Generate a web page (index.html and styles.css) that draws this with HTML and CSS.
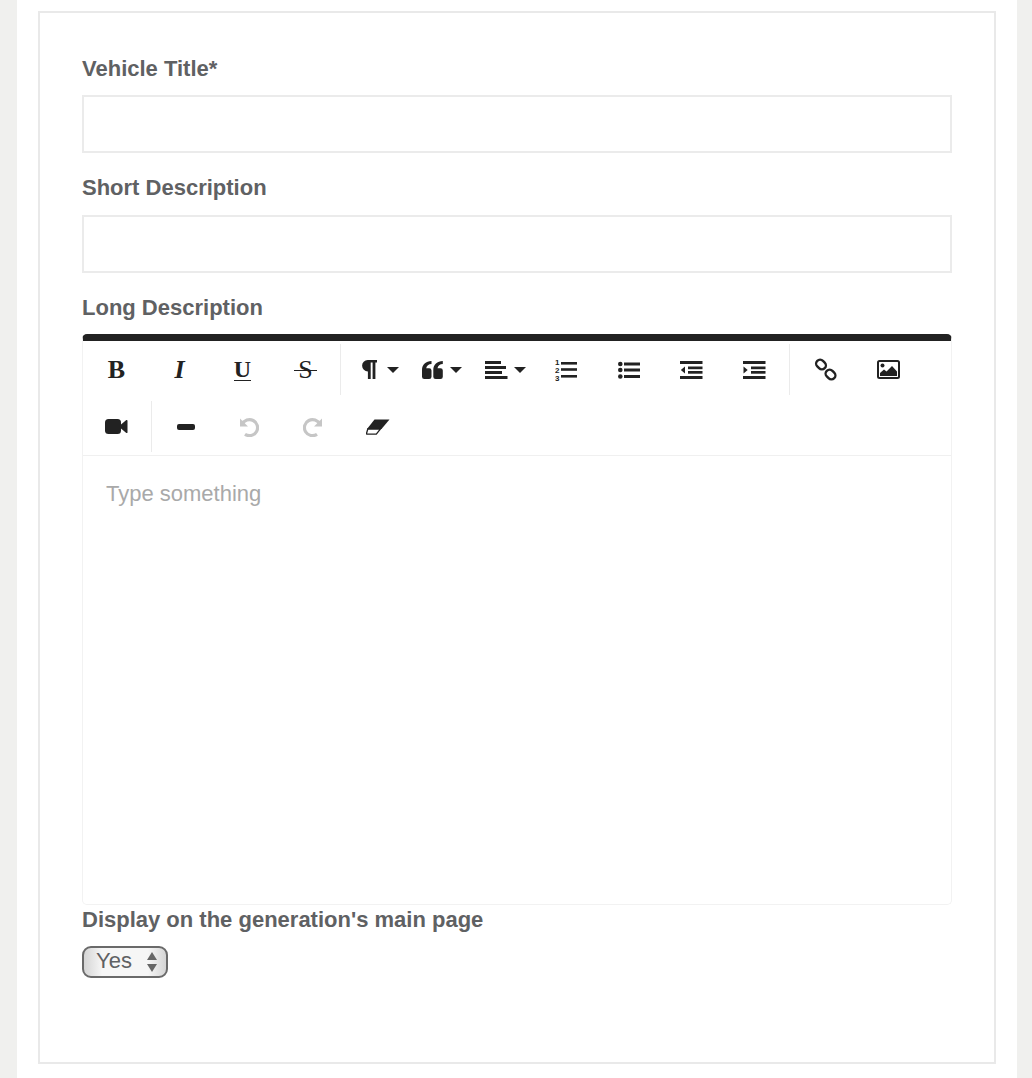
FILE: index.html
```html
<!DOCTYPE html>
<html lang="en">
<head>
  <meta charset="UTF-8" />
  <meta name="viewport" content="width=device-width, initial-scale=1.0"/>
  <title>Add Vehicle</title>
  <link rel="stylesheet" href="styles.css">
</head>
<body>
  <div class="page">
    <form class="panel">
      <label class="field-label" for="title">Vehicle Title*</label>
      <input class="field-input" type="text" id="title" />

      <label class="field-label field-label-low" for="short">Short Description</label>
      <input class="field-input" type="text" id="short" />

      <label class="field-label">Long Description</label>
      <div class="editor">
        <div class="toolbar">
          <button type="button" class="tool"><span class="serif">B</span></button>
          <button type="button" class="tool"><span class="serif italic">I</span></button>
          <button type="button" class="tool"><span class="serif under">U</span></button>
          <button type="button" class="tool"><span class="serif strike">S</span></button>
          <span class="sep"></span>

          <button type="button" class="tool tool-para">
            <svg width="15" height="19" viewBox="0 0 15 19"><path d="M5.700 0H15v2.600h-1.600V19h-2.800V2.600H8.700V19H5.900v-7.600A5.700 5.700 0 0 1 5.700 0z"/></svg>
            <i class="caret"></i>
          </button>
          <button type="button" class="tool tool-drop">
            <svg width="21" height="18" viewBox="0 0 21 18"><path d="M9.500 0v3C6.600 3 4.600 4.700 4.200 7.200h3a2.300 2.300 0 0 1 2.300 2.300v6.200A2.300 2.300 0 0 1 7.200 18H2.300A2.300 2.300 0 0 1 0 15.700V9C0 3.600 4 0 9.500 0z"/><path d="M20.800 0v3c-2.900 0-4.900 1.700-5.300 4.200h3a2.300 2.300 0 0 1 2.300 2.300v6.200a2.300 2.300 0 0 1-2.300 2.300h-4.900a2.300 2.300 0 0 1-2.300-2.300V9c0-5.400 4-9 9.500-9z"/></svg>
            <i class="caret"></i>
          </button>
          <button type="button" class="tool tool-drop">
            <svg width="23" height="18" viewBox="0 0 23 18"><rect width="16" height="3"/><rect y="5" width="21" height="3"/><rect y="10" width="17" height="3"/><rect y="15" width="22.500" height="3"/></svg>
            <i class="caret caret-near"></i>
          </button>
          <button type="button" class="tool">
            <svg width="22" height="26" viewBox="0 -2 22 26">
              <text class="nums" x="0" y="6">1</text><text class="nums" x="0" y="14">2</text><text class="nums" x="0" y="22">3</text>
              <rect x="6" y="3" width="16" height="2.600"/><rect x="6" y="9.200" width="16" height="2.600"/><rect x="6" y="16" width="16" height="2.600"/>
            </svg>
          </button>
          <button type="button" class="tool">
            <svg width="22" height="18" viewBox="0 0 22 18">
              <circle cx="2.300" cy="3" r="2.300"/><circle cx="2.300" cy="9" r="2.300"/><circle cx="2.300" cy="15.500" r="2.300"/>
              <rect x="6" y="1.500" width="16" height="3"/><rect x="6" y="7.500" width="16" height="3"/><rect x="6" y="14" width="16" height="3"/>
            </svg>
          </button>
          <button type="button" class="tool">
            <svg width="23" height="18" viewBox="0 0 23 18">
              <rect width="22.500" height="3"/><rect x="8" y="5.500" width="14.500" height="2.700"/><rect x="8" y="10" width="14.500" height="2.700"/><rect y="15" width="22.500" height="3"/>
              <path d="M5 5.500v7L.8 9z"/>
            </svg>
          </button>
          <button type="button" class="tool">
            <svg width="23" height="18" viewBox="0 0 23 18">
              <rect width="22.500" height="3"/><rect x="8" y="5.500" width="14.500" height="2.700"/><rect x="8" y="10" width="14.500" height="2.700"/><rect y="15" width="22.500" height="3"/>
              <path d="M.5 5.500v7L4.700 9z"/>
            </svg>
          </button>
          <span class="sep"></span>

          <button type="button" class="tool">
            <svg width="22" height="21" viewBox="0 0 22 21" class="link-icon">
              <rect x=".75" y="1.500" width="10.500" height="8" rx="4" transform="rotate(45 6 5.500)"/>
              <rect x="10.250" y="11.500" width="10.500" height="8" rx="4" transform="rotate(45 15.500 15.500)"/>
            </svg>
          </button>
          <button type="button" class="tool">
            <svg width="23" height="19" viewBox="0 0 23 19">
              <rect x="1" y="1" width="21" height="17" rx="1.500" fill="#fff" stroke="#222" stroke-width="2"/>
              <circle cx="5.500" cy="5.500" r="2"/>
              <path d="M3 16v-3l4-3.500 2.500 2L15 6l5 5.500V16z"/>
            </svg>
          </button>
          <button type="button" class="tool">
            <svg width="23" height="15" viewBox="0 0 23 15">
              <rect width="16" height="15" rx="3.500"/>
              <path d="M16 5.500 21 1.200c.7-.6 1.500-.3 1.500.6v11.400c0 .9-.8 1.200-1.500.6l-5-4.300z"/>
            </svg>
          </button>
          <span class="sep sep-tight"></span>

          <button type="button" class="tool">
            <svg width="18" height="6" viewBox="0 0 18 6"><rect width="18" height="6" rx="2"/></svg>
          </button>
          <button type="button" class="tool">
            <svg class="off" width="20" height="20" viewBox="0 0 20 20"><path d="M3.200 7.500A8 8 0 1 1 6 17.200" fill="none" stroke-width="3.200"/><path class="head" d="M1 1.500v8h8z"/></svg>
          </button>
          <button type="button" class="tool tool-nudge">
            <svg class="off" width="20" height="20" viewBox="0 0 20 20"><path d="M16.800 7.500A8 8 0 1 0 14 17.200" fill="none" stroke-width="3.200"/><path class="head" d="M19 1.500v8h-8z"/></svg>
          </button>
          <button type="button" class="tool tool-nudge">
            <svg width="24" height="16" viewBox="0 0 24 16">
              <path d="M8.500.5H23.500L15.500 10H1z"/>
              <path d="M1.800 10h12.700l-4.200 5.200H1.200c-.7 0-1-.5-.6-1.100z" fill="#fff" stroke="#222" stroke-width="1.300"/>
            </svg>
          </button>
        </div>
        <div class="editor-body">
          <span class="placeholder">Type something</span>
        </div>
      </div>

      <label class="field-label" for="display">Display on the generation's main page</label>
      <div class="select-wrap">
        <select class="mini-select" id="display">
          <option>Yes</option>
          <option>No</option>
        </select>
        <svg class="select-arrows" width="12" height="22" viewBox="0 0 12 22"><path d="M6 1l5 8H1zM1 13h10l-5 8z"/></svg>
      </div>
    </form>
  </div>
</body>
</html>
```

FILE: styles.css
```css
html, body {
  margin: 0;
  padding: 0;
}
body {
  background-color: #f0f0ee;
  font-family: "Liberation Sans", Arial, sans-serif;
  color: #5f6163;
}
.page {
  width: 1000px;
  height: 1078px;
  margin-left: 17px;
  padding: 11px 21px 0;
  box-sizing: border-box;
  background: white;
}
.panel {
  border: 2px solid #e9e9e9;
  padding: 41px 42px 84px;
}
.field-label {
  display: block;
  font-size: 22px;
  font-weight: bold;
  line-height: 30px;
  margin-bottom: 11px;
}
.field-label-low {
  margin-bottom: 12px;
}
.field-input {
  display: block;
  width: 100%;
  height: 58px;
  box-sizing: border-box;
  border: 2px solid #ebebeb;
  margin-bottom: 20px;
  background: white;
}

/* editor */
.editor {
  border: 1px solid #f2f2f2;
  border-top: 7px solid #222;
  border-radius: 5px;
}
.toolbar {
  display: flex;
  flex-wrap: wrap;
  row-gap: 6px;
  padding: 3px 2px;
  border-bottom: 1px solid #f0f0f0;
}
.tool {
  width: 63px;
  height: 51px;
  padding: 0;
  border: none;
  background: none;
  color: #222;
  display: flex;
  align-items: center;
  justify-content: center;
  fill: #222;
}
.tool-para {
  padding-left: 8px;
}
.tool-para .caret {
  margin-left: 10px;
}
.tool-drop {
  padding-left: 5px;
}
.tool-nudge {
  margin-left: 1.5px;
}
.sep {
  width: 1px;
  height: 51px;
  margin: 0 4px 0 3px;
  background: #ebebeb;
}
.sep-tight {
  margin-right: 2px;
}
.serif {
  font-family: "Liberation Serif", "Times New Roman", serif;
  font-weight: bold;
  font-size: 26px;
  line-height: 26px;
}
.italic {
  font-style: italic;
}
.under {
  font-size: 24px;
  line-height: 21px;
  border-bottom: 1.5px solid #222;
}
.strike {
  position: relative;
  font-weight: normal;
}
.strike::after {
  content: "";
  position: absolute;
  left: -4px;
  right: -4px;
  top: 13px;
  border-top: 1.5px solid #222;
}
.caret {
  width: 0;
  height: 0;
  margin-left: 7px;
  border-left: 6px solid transparent;
  border-right: 6px solid transparent;
  border-top: 6px solid #222;
}
.caret-near {
  margin-left: 6px;
}
.nums {
  font-family: "Liberation Sans", Arial, sans-serif;
  font-size: 8px;
  font-weight: bold;
}
.link-icon {
  overflow: visible;
}
.link-icon rect {
  fill: none;
  stroke: #222;
  stroke-width: 2.400;
}
.off {
  stroke: #c6c6c6;
}
.off .head {
  fill: #c6c6c6;
  stroke: none;
}
.editor-body {
  height: 448px;
  padding: 24px 23px;
  box-sizing: border-box;
}
.placeholder {
  font-size: 22px;
  line-height: 28px;
  color: #a9a9a9;
}

/* select */
.select-wrap {
  position: relative;
  width: 86px;
}
.mini-select {
  appearance: none;
  display: block;
  width: 86px;
  height: 32px;
  padding: 0 0 4px 12px;
  box-sizing: border-box;
  border: 2px solid #6a6a6a;
  border-radius: 9px;
  font-family: "Liberation Sans", Arial, sans-serif;
  font-size: 22px;
  color: #5f6163;
  background: linear-gradient(to right, #d5d5d5, #f6f6f6 22%, #f6f6f6 78%, #d5d5d5);
}
.select-arrows {
  position: absolute;
  right: 10px;
  top: 5px;
  fill: #666;
  pointer-events: none;
}
```
